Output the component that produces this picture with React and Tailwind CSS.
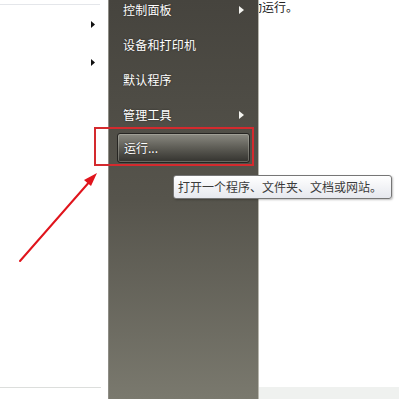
import React from 'react';

const font = { fontFamily: "'Noto Sans CJK SC', 'Noto Sans', sans-serif" };

const items = [
  { label: '控制面板', arrow: true },
  { label: '设备和打印机' },
  { label: '默认程序' },
  { label: '管理工具', arrow: true },
];

function WhiteArrow() {
  return (
    <svg width="5" height="8" viewBox="0 0 5 8" className="shrink-0">
      <path d="M0 0 L5 4 L0 8 Z" fill="#f4f4f0" />
    </svg>
  );
}

function BlackArrow() {
  return (
    <svg width="4" height="7" viewBox="0 0 4 7">
      <path d="M0 0 L4 3.5 L0 7 Z" fill="#111" />
    </svg>
  );
}

export default function App() {
  return (
    <div className="relative w-[399px] h-[399px] overflow-hidden bg-white text-[12px]" style={font}>
      <div className="flex h-full">
        {/* left pane of the start menu */}
        <div className="w-[108px] flex flex-col">
          <div className="mt-[4px] h-px w-[100px] bg-[#e4e6ea]" />
          <div className="flex flex-col items-end pr-[13px] pt-[16px] gap-[31px]">
            <BlackArrow />
            <BlackArrow />
          </div>
          <div className="mt-auto mb-[11px] h-px w-[101px] bg-[#dcdedc]" />
        </div>

        {/* right pane */}
        <div className="w-[151px] flex flex-col border-l border-[#8e8d86] border-r border-r-[#b8b7ae] bg-gradient-to-b from-[#46443e] via-[#56544c] to-[#7a796e]">
          <div className="-mt-[8px] flex flex-col">
            {items.map((it) => (
              <div key={it.label} className="h-[35px] flex items-center justify-between pl-[14px] pr-[14px] text-white">
                <span className="tracking-[0.2px] [text-shadow:0_0_2px_rgba(0,0,0,0.5)]">{it.label}</span>
                {it.arrow && <WhiteArrow />}
              </div>
            ))}
          </div>
          <div className="mt-px ml-[8px] w-[133px] h-[30px] rounded-[3px] border border-[#262522] shadow-[inset_0_0_0_1px_rgba(200,200,190,0.35)] bg-gradient-to-b from-[#8b8a82] via-[#5d5c55] to-[#34332f] flex items-center pl-[6px] text-white">
            <span className="[text-shadow:0_0_2px_rgba(0,0,0,0.6)]">运行...</span>
          </div>
        </div>

        <div className="flex-1 flex flex-col overflow-hidden">
          <div className="-ml-[9px] leading-[13px] text-[#222] whitespace-nowrap">动运行。</div>
          <div className="mt-auto h-[12px] bg-[#eff1ef]" />
        </div>
      </div>

      {/* red highlight box */}
      <div className="absolute left-[94px] top-[127px] w-[160px] h-[39px] border-2 border-[#d42a2e]" />

      {/* tooltip */}
      <div className="absolute left-[173px] top-[175px] w-[219px] h-[24px] rounded-[3px] border border-[#767676] bg-gradient-to-b from-white to-[#e6e8ee] flex items-center pl-[4px] text-[#3b3b3b] shadow-[1px_1px_2px_rgba(0,0,0,0.25)] whitespace-nowrap">
        打开一个程序、文件夹、文档或网站。
      </div>

      {/* red arrow */}
      <svg className="absolute left-0 top-0" width="399" height="399" viewBox="0 0 399 399">
        <path d="M20 261 L91 180" stroke="#e0141c" strokeWidth="2" strokeLinecap="round" />
        <path d="M97 173 L84 180 L91 186 Z" fill="#e0141c" />
      </svg>
    </div>
  );
}
